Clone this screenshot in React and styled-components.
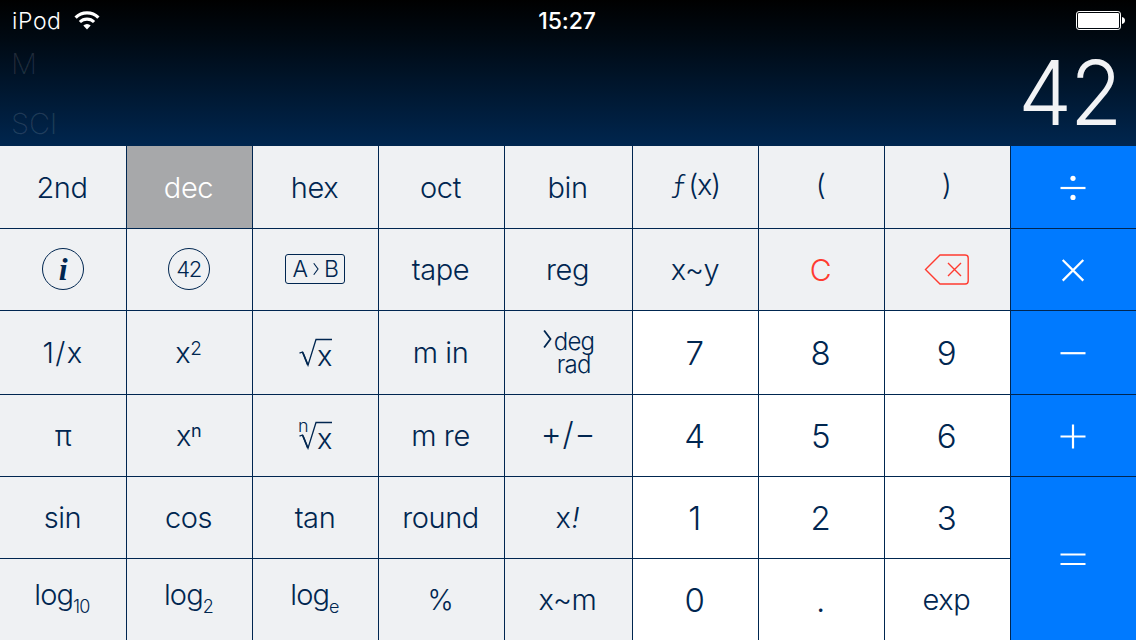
import styled, { createGlobalStyle } from "styled-components";

const NAVY = "#002650";
const RED = "#ff3b30";

const fills = {
    active: "#a7a8aa",
    digit: "#fff",
    operator: "#007aff",
};
const inks = {
    active: "#fff",
    danger: RED,
};

const GlobalStyle = createGlobalStyle`
    * {
        box-sizing: border-box;
    }
    body {
        margin: 0;
        overflow: hidden;
    }
    svg {
        display: block;
        flex: none;
    }
`;

const Calculator = styled.div`
    width: 1136px;
    height: 640px;
    display: flex;
    flex-direction: column;
    font-family: Inter, "Liberation Sans", sans-serif;
    font-weight: 300;
    overflow: hidden;
`;

const Display = styled.div`
    height: 146px;
    display: flex;
    flex-direction: column;
    background: linear-gradient(#000 0%, #000a14 28%, #00264f 100%);
    color: #fff;
`;
const StatusBar = styled.div`
    flex: none;
    height: 40px;
    display: grid;
    grid-template-columns: 1fr auto 1fr;
    align-items: center;
    padding: 1px 10px 0 12px;
    font-size: 23px;
`;
const Device = styled.div`
    display: flex;
    align-items: center;
    gap: 12px;
    letter-spacing: 0.6px;
`;
const Clock = styled.div`
    font-weight: 500;
    font-size: 23px;
    letter-spacing: -0.1px;
    margin-right: 4px;
`;
const Battery = styled.div`
    display: flex;
    justify-content: flex-end;
`;
const Readout = styled.div`
    flex: none;
    height: 106px;
    display: flex;
    justify-content: space-between;
`;
const Indicators = styled.div`
    display: flex;
    flex-direction: column;
    gap: 28px;
    padding: 8px 0 0 11px;
`;
const Indicator = styled.div`
    flex: none;
    height: 32px;
    font-size: 29px;
    line-height: 32px;
    font-weight: 200;
    letter-spacing: -0.1px;
    color: rgba(255, 255, 255, 0.13);
`;
const Result = styled.div`
    font-size: 90px;
    line-height: 106px;
    font-weight: 260;
    letter-spacing: -2px;
    color: #f2f3f5;
    padding-right: 16px;
    transform: scaleX(0.95);
    transform-origin: right;
`;

const Keypad = styled.div`
    flex: 1;
    display: grid;
    grid-template-columns: 126px repeat(3, 125px) 127px repeat(4, 125px);
    grid-template-rows: 82px 81px 83px repeat(3, 81px);
    gap: 1px;
    background: ${NAVY};
`;
const Key = styled.button`
    display: flex;
    align-items: center;
    justify-content: center;
    min-width: 0;
    border: none;
    padding: ${(p) => p.$drop || 0}px ${(p) => p.$inset ?? 2}px ${(p) => p.$lift || 0}px 0;
    background: ${(p) => fills[p.$kind] || "#eff1f3"};
    color: ${(p) => inks[p.$kind] || NAVY};
    font-family: inherit;
    font-weight: 300;
    font-size: ${(p) => p.$size || (p.$kind === "digit" ? 33 : 29)}px;
    line-height: 36px;
    letter-spacing: ${(p) => p.$spacing ?? -0.4}px;
    grid-row: ${(p) => (p.$tall ? "span 2" : "auto")};
`;
const Label = styled.span`
    white-space: nowrap;
`;

const Sup = styled.sup`
    font-size: ${(p) => (p.$bold ? 18 : 19)}px;
    font-weight: ${(p) => (p.$bold ? 400 : 300)};
    line-height: 0;
    vertical-align: ${(p) => (p.$bold ? 9 : 8)}px;
`;
const Sub = styled.sub`
    font-size: 18px;
    font-weight: 280;
    line-height: 0;
    letter-spacing: -0.8px;
    vertical-align: -8px;
`;
const Florin = styled.span`
    font-family: "Noto Sans CJK SC", sans-serif;
    line-height: 0;
    margin-right: 3px;
`;
const Bang = styled.i`
    margin-left: 1px;
`;

const Ring = styled.span`
    width: 42px;
    height: 42px;
    display: flex;
    align-items: center;
    justify-content: center;
    border: 1.4px solid ${NAVY};
    border-radius: 50%;
    margin: 0 0 1px 1px;
`;
const InfoLetter = styled.span`
    font-family: "Liberation Serif", serif;
    font-style: italic;
    font-weight: 700;
    font-size: 32px;
    line-height: 40px;
`;
const RingNumber = styled.span`
    font-size: 22px;
    letter-spacing: -1.5px;
    margin-right: 1px;
`;
const ConvertBox = styled.span`
    width: 60px;
    height: 30px;
    display: flex;
    align-items: center;
    justify-content: space-between;
    padding: 0 5px 0 7px;
    border: 1.4px solid ${NAVY};
    border-radius: 3px;
    font-size: 23px;
    margin-bottom: 1px;
`;

const RootBox = styled.span`
    position: relative;
    display: block;
    width: 33px;
    height: 29px;
`;
const Radicand = styled.span`
    position: absolute;
    left: 18px;
    top: 0;
`;
const RootIndex = styled.span`
    position: absolute;
    left: -1px;
    top: -7px;
    font-size: 18px;
    line-height: 24px;
`;

const AngleUnits = styled.span`
    display: grid;
    grid-template-columns: 9px auto;
    grid-template-rows: 23px 23px;
    column-gap: 2px;
    justify-items: start;
    font-size: 24px;
    line-height: 23px;
    letter-spacing: -0.8px;
    margin-left: 2px;
`;
const Rad = styled.span`
    grid-column: 2;
    margin-left: 3px;
`;

const WifiIcon = () => (
    <svg width="26" height="20" viewBox="0 0 26 20" fill="none" stroke="#fff">
        <path d="M1.6 6.6a16.2 16.2 0 0 1 22.8 0" strokeWidth="3.3" />
        <path d="M5.9 11a10.1 10.1 0 0 1 14.2 0" strokeWidth="3.1" />
        <path d="M9.3 14.6a5.3 5.3 0 0 1 7.4 0L13 18.4z" fill="#fff" stroke="none" />
    </svg>
);

const BatteryIcon = () => (
    <svg width="50" height="19" viewBox="0 0 50 19">
        <rect x="0.5" y="0.5" width="44" height="18" rx="2.6" fill="none" stroke="#fff" />
        <rect x="2" y="2" width="41" height="15" rx="1.2" fill="#fff" />
        <path d="M46 6c2 .3 3 1.6 3 3.5s-1 3.2-3 3.5z" fill="#fff" />
    </svg>
);

const Chevron = ({ width, height, weight = 1.5 }) => (
    <svg
        width={width}
        height={height}
        viewBox="0 0 8 18"
        preserveAspectRatio="none"
        fill="none"
        stroke={NAVY}
        strokeWidth={weight}
    >
        <path d="M1 .5L6.7 9L1 17.5" />
    </svg>
);

const RootSign = () => (
    <svg width="33" height="29" viewBox="0 0 33 29" fill="none" stroke={NAVY}>
        <path d="M.5 15.2L3.6 14L9 27.2L17 1.5H33" strokeWidth="1.3" />
        <path d="M3.8 14.5L8.8 27" strokeWidth="1.8" />
    </svg>
);

const BackspaceIcon = () => (
    <svg width="46" height="32" viewBox="0 0 46 32" fill="none" stroke={RED} strokeWidth="1.4">
        <path d="M1.5 15.5L16 1H41.2a3 3 0 0 1 3 3V27a3 3 0 0 1-3 3H16z" />
        <path d="M24 9L37 22M37 9L24 22" />
    </svg>
);

const Operator = ({ children }) => (
    <svg width="26" height="26" viewBox="0 0 26 26" stroke="#fff" strokeWidth="2.2" fill="#fff">
        {children}
    </svg>
);

const Power = ({ exponent, bold }) => (
    <>
        x<Sup $bold={bold}>{exponent}</Sup>
    </>
);

const Log = ({ base }) => (
    <>
        log<Sub>{base}</Sub>
    </>
);

const Root = ({ index }) => (
    <RootBox>
        <RootSign />
        {index && <RootIndex>{index}</RootIndex>}
        <Radicand>x</Radicand>
    </RootBox>
);

const keys = [
    { id: "2nd", label: "2nd", drop: 2 },
    { id: "dec", label: "dec", kind: "active", drop: 2 },
    { id: "hex", label: "hex", drop: 2 },
    { id: "oct", label: "oct", drop: 2 },
    { id: "bin", label: "bin", drop: 2 },
    { id: "fx", label: <><Florin>ƒ</Florin>(x)</>, lift: 4, inset: 0, spacing: -1.4 },
    { id: "open", label: "(", lift: 4 },
    { id: "close", label: ")", lift: 4 },
    {
        id: "divide",
        kind: "operator",
        label: (
            <Operator>
                <path d="M.5 14H25.5" />
                <circle cx="13" cy="4.3" r="2.6" stroke="none" />
                <circle cx="13" cy="23.4" r="2.6" stroke="none" />
            </Operator>
        ),
    },

    { id: "info", label: <Ring><InfoLetter>i</InfoLetter></Ring>, inset: 1 },
    { id: "answer", label: <Ring><RingNumber>42</RingNumber></Ring> },
    { id: "convert", label: <ConvertBox>A<Chevron width={6} height={12} />B</ConvertBox> },
    { id: "tape", label: "tape" },
    { id: "reg", label: "reg" },
    { id: "xy", label: "x~y", inset: 1 },
    { id: "clear", label: "C", kind: "danger", size: 30 },
    { id: "back", label: <BackspaceIcon /> },
    {
        id: "times",
        kind: "operator",
        label: (
            <Operator>
                <path d="M2.7 3L23.3 23.6M23.3 3L2.7 23.6" />
            </Operator>
        ),
    },

    { id: "inverse", label: "1/x", inset: 0, spacing: 1.4 },
    { id: "square", label: <Power exponent="2" /> },
    { id: "sqrt", label: <Root />, inset: 0 },
    { id: "min", label: "m in" },
    {
        id: "degrad",
        label: (
            <AngleUnits>
                <Chevron width={9} height={18} weight={1.6} />
                <span>deg</span>
                <Rad>rad</Rad>
            </AngleUnits>
        ),
    },
    { id: "7", label: "7", kind: "digit" },
    { id: "8", label: "8", kind: "digit" },
    { id: "9", label: "9", kind: "digit" },
    { id: "minus", kind: "operator", label: <Operator><path d="M.5 13.2H25.5" /></Operator> },

    { id: "pi", label: "π", inset: 0 },
    { id: "power", label: <Power exponent="n" bold /> },
    { id: "nroot", label: <Root index="n" />, inset: 0 },
    { id: "mre", label: "m re" },
    { id: "sign", label: "+/−", size: 32, spacing: 0.8, lift: 3, inset: 0 },
    { id: "4", label: "4", kind: "digit" },
    { id: "5", label: "5", kind: "digit" },
    { id: "6", label: "6", kind: "digit" },
    { id: "plus", kind: "operator", label: <Operator><path d="M.5 13.5H25.5M13 1.5V25.5" /></Operator> },

    { id: "sin", label: "sin", inset: 1 },
    { id: "cos", label: "cos" },
    { id: "tan", label: "tan", inset: 1 },
    { id: "round", label: "round" },
    { id: "factorial", label: <>x<Bang>!</Bang></> },
    { id: "1", label: "1", kind: "digit" },
    { id: "2", label: "2", kind: "digit" },
    { id: "3", label: "3", kind: "digit" },
    {
        id: "equals",
        kind: "operator",
        tall: true,
        label: <Operator><path d="M.5 8.5H25.5M.5 18H25.5" /></Operator>,
    },

    { id: "log10", label: <Log base="10" />, lift: 10, spacing: -0.9 },
    { id: "log2", label: <Log base="2" />, lift: 10, spacing: -0.9 },
    { id: "loge", label: <Log base="e" />, lift: 10, spacing: -0.9 },
    { id: "percent", label: "%", size: 28 },
    { id: "xm", label: "x~m" },
    { id: "0", label: "0", kind: "digit" },
    { id: "dot", label: ".", kind: "digit" },
    { id: "exp", label: "exp", kind: "digit", size: 29 },
];

const App = () => {
    return (
        <Calculator>
            <GlobalStyle />
            <Display>
                <StatusBar>
                    <Device>
                        iPod
                        <WifiIcon />
                    </Device>
                    <Clock>15:27</Clock>
                    <Battery>
                        <BatteryIcon />
                    </Battery>
                </StatusBar>
                <Readout>
                    <Indicators>
                        <Indicator>M</Indicator>
                        <Indicator>SCI</Indicator>
                    </Indicators>
                    <Result>42</Result>
                </Readout>
            </Display>
            <Keypad>
                {keys.map((key) => (
                    <Key
                        key={key.id}
                        $kind={key.kind}
                        $size={key.size}
                        $spacing={key.spacing}
                        $lift={key.lift}
                        $drop={key.drop}
                        $inset={key.inset}
                        $tall={key.tall}
                    >
                        <Label>{key.label}</Label>
                    </Key>
                ))}
            </Keypad>
        </Calculator>
    );
};

export default App;
